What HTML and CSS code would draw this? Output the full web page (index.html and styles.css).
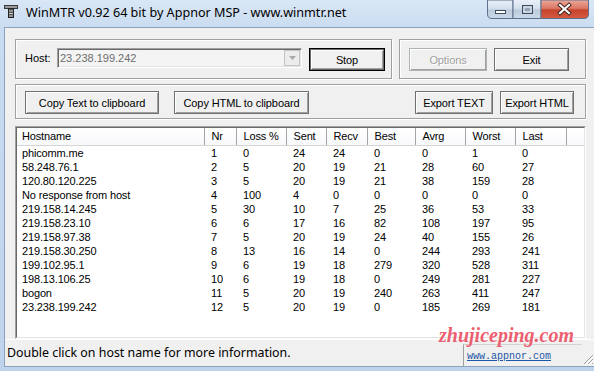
FILE: index.html
```html
<!DOCTYPE html>
<html>
<head>
<meta charset="utf-8">
<link rel="stylesheet" href="styles.css">
</head>
<body>
<div class="window">
  <div class="titlebar">
    <svg class="app-icon" width="14" height="13" viewBox="0 0 14 13">
      <rect x="0.5" y="0.5" width="13" height="3" fill="#9a9a9a" stroke="#3a3a3a"/>
      <rect x="4.5" y="3.5" width="5" height="9" fill="#5a5a5a" stroke="#222"/>
      <line x1="5" y1="6" x2="9" y2="6" stroke="#c8c8c8"/>
      <line x1="5" y1="8.5" x2="9" y2="8.5" stroke="#c8c8c8"/>
      <line x1="5" y1="11" x2="9" y2="11" stroke="#c8c8c8"/>
    </svg>
    <span class="title">WinMTR v0.92 64 bit by Appnor MSP - www.winmtr.net</span>
    <svg class="caption-buttons" width="102" height="19" viewBox="0 0 102 19">
      <defs>
        <linearGradient id="gBlue" x1="0" y1="0" x2="0" y2="1">
          <stop offset="0" stop-color="#e8eff8"/>
          <stop offset="0.45" stop-color="#d5e1ee"/>
          <stop offset="0.55" stop-color="#bccbdd"/>
          <stop offset="1" stop-color="#ccd9e8"/>
        </linearGradient>
        <linearGradient id="gRed" x1="0" y1="0" x2="0" y2="1">
          <stop offset="0" stop-color="#eaa99b"/>
          <stop offset="0.45" stop-color="#dc7763"/>
          <stop offset="0.55" stop-color="#c6432c"/>
          <stop offset="1" stop-color="#d65d45"/>
        </linearGradient>
      </defs>
      <path d="M0.5 0 V14 Q0.5 18.5 5 18.5 H26 V0 Z" fill="url(#gBlue)" stroke="#5f708a"/>
      <rect x="26" y="0" width="28" height="18.5" fill="url(#gBlue)"/>
      <path d="M26 0 V18.5 H54 V0" fill="none" stroke="#5f708a"/>
      <path d="M54 0 V18.5 H97 Q101.5 18.5 101.5 14 V0 Z" fill="url(#gRed)" stroke="#5f708a"/>
      <rect x="8.5" y="10.5" width="10" height="3" fill="#ffffff" stroke="#3f4b5e"/>
      <rect x="35.5" y="5.5" width="10" height="8" fill="#94a4ba" stroke="#3f4b5e"/>
      <rect x="37" y="7" width="7" height="5" fill="none" stroke="#ffffff"/>
      <path d="M73 5 L82 13 M82 5 L73 13" stroke="#3b1f1a" stroke-width="4" stroke-linecap="square"/>
      <path d="M73 5 L82 13 M82 5 L73 13" stroke="#ffffff" stroke-width="2.2" stroke-linecap="square"/>
    </svg>
  </div>
  <div class="frame">
    <div class="client">
      <div class="content">
        <div class="row-top">
          <div class="group group-host">
            <span class="host-label">Host:</span>
            <div class="combo">
              <span class="combo-text">23.238.199.242</span>
              <span class="combo-btn">
                <svg width="7" height="4" viewBox="0 0 7 4"><path d="M0 0 H7 L3.5 4 Z" fill="#a8a8a8"/></svg>
              </span>
            </div>
            <button class="btn btn-default btn-stop">Stop</button>
          </div>
          <div class="group group-opts">
            <button class="btn btn-options" disabled>Options</button>
            <button class="btn btn-exit">Exit</button>
          </div>
        </div>
        <div class="group group-export">
          <button class="btn btn-copytext">Copy Text to clipboard</button>
          <button class="btn btn-copyhtml">Copy HTML to clipboard</button>
          <button class="btn btn-exptext">Export TEXT</button>
          <button class="btn btn-exphtml">Export HTML</button>
        </div>
        <div class="list">
          <div class="list-inner">
            <table class="grid">
              <colgroup>
                <col class="c-host"><col class="c-nr"><col class="c-loss"><col class="c-sent"><col class="c-recv"><col class="c-best"><col class="c-avrg"><col class="c-worst"><col class="c-last"><col class="c-fill">
              </colgroup>
              <thead>
                <tr><th class="host">Hostname</th><th>Nr</th><th>Loss %</th><th>Sent</th><th>Recv</th><th>Best</th><th>Avrg</th><th>Worst</th><th>Last</th><th class="fill"></th></tr>
              </thead>
              <tbody>
                <tr><td class="host">phicomm.me</td><td>1</td><td>0</td><td>24</td><td>24</td><td>0</td><td>0</td><td>1</td><td>0</td><td></td></tr>
                <tr><td class="host">58.248.76.1</td><td>2</td><td>5</td><td>20</td><td>19</td><td>21</td><td>28</td><td>60</td><td>27</td><td></td></tr>
                <tr><td class="host">120.80.120.225</td><td>3</td><td>5</td><td>20</td><td>19</td><td>21</td><td>38</td><td>159</td><td>28</td><td></td></tr>
                <tr><td class="host">No response from host</td><td>4</td><td>100</td><td>4</td><td>0</td><td>0</td><td>0</td><td>0</td><td>0</td><td></td></tr>
                <tr><td class="host">219.158.14.245</td><td>5</td><td>30</td><td>10</td><td>7</td><td>25</td><td>36</td><td>53</td><td>33</td><td></td></tr>
                <tr><td class="host">219.158.23.10</td><td>6</td><td>6</td><td>17</td><td>16</td><td>82</td><td>108</td><td>197</td><td>95</td><td></td></tr>
                <tr><td class="host">219.158.97.38</td><td>7</td><td>5</td><td>20</td><td>19</td><td>24</td><td>40</td><td>155</td><td>26</td><td></td></tr>
                <tr><td class="host">219.158.30.250</td><td>8</td><td>13</td><td>16</td><td>14</td><td>0</td><td>244</td><td>293</td><td>241</td><td></td></tr>
                <tr><td class="host">199.102.95.1</td><td>9</td><td>6</td><td>19</td><td>18</td><td>279</td><td>320</td><td>528</td><td>311</td><td></td></tr>
                <tr><td class="host">198.13.106.25</td><td>10</td><td>6</td><td>19</td><td>18</td><td>0</td><td>249</td><td>281</td><td>227</td><td></td></tr>
                <tr><td class="host">bogon</td><td>11</td><td>5</td><td>20</td><td>19</td><td>240</td><td>263</td><td>411</td><td>247</td><td></td></tr>
                <tr><td class="host">23.238.199.242</td><td>12</td><td>5</td><td>20</td><td>19</td><td>0</td><td>185</td><td>269</td><td>181</td><td></td></tr>
              </tbody>
            </table>
          </div>
        </div>
      </div>
      <div class="statusbar">
        <div class="status-main">Double click on host name for more information.</div>
        <div class="status-link"><span class="link">www.appnor.com</span></div>
        <svg class="grip" width="12" height="12" viewBox="0 0 12 12">
          <path d="M11 2 L2 11 M11 6 L6 11 M11 10 L10 11" stroke="#a0a0a0" stroke-width="1"/>
          <path d="M12 3 L3 12 M12 7 L7 12" stroke="#ffffff" stroke-width="1"/>
        </svg>
      </div>
    </div>
  </div>
  <div class="watermark">zhujiceping.com</div>
</div>
</body>
</html>
```
FILE: styles.css
```css
html, body {
  margin: 0;
  padding: 0;
}
body {
  width: 594px;
  height: 371px;
  overflow: hidden;
  background: #c3d7ee;
}
.window {
  position: relative;
  width: 594px;
  height: 371px;
  display: flex;
  flex-direction: column;
  background: linear-gradient(#d9e7f6 0px, #c9dbf0 30px, #bfd3ec 100%);
}
.titlebar {
  height: 27px;
  display: flex;
  align-items: flex-start;
  flex: none;
}
.app-icon {
  margin: 5px 0 0 4px;
  flex: none;
}
.title {
  flex: none;
  margin: 4px 0 0 8px;
  font-family: "Noto Sans", "Open Sans", sans-serif;
  font-size: 12.6px;
  line-height: 18px;
  color: #000;
  white-space: nowrap;
}
.caption-buttons {
  display: block;
  flex: none;
  margin-left: auto;
  margin-right: 5px;
}
.frame {
  flex: 1;
  display: flex;
  padding: 0 5px 4px 4px;
}
.client {
  flex: 1;
  display: flex;
  flex-direction: column;
  background: #f0f0f0;
  border: 1px solid #8ba2bf;
  font-family: "Liberation Sans", Arial, sans-serif;
  font-size: 11px;
  color: #000;
}
.content {
  flex: 1;
  display: flex;
  flex-direction: column;
  padding: 11px 8px 0 10px;
}
.row-top {
  display: flex;
  gap: 7px;
  height: 40px;
}
.group {
  box-sizing: border-box;
  border: 1px solid #a0a0a0;
  box-shadow: inset 1px 1px 0 #fff, 1px 1px 0 #fff;
  display: flex;
  align-items: flex-start;
}
.group-host {
  width: 377px;
  padding: 8px 0 0 9px;
}
.group-opts {
  flex: 1;
  padding: 8px 0 0 9px;
  gap: 7px;
}
.group-export {
  margin-top: 5px;
  height: 35px;
  padding: 6px 11px 0 9px;
}
.host-label {
  width: 32px;
  line-height: 20px;
}
.combo {
  box-sizing: border-box;
  width: 245px;
  height: 20px;
  display: flex;
  align-items: stretch;
  background: #f4f4f4;
  border-top: 1px solid #a0a0a0;
  border-left: 1px solid #a0a0a0;
  border-right: 1px solid #fff;
  border-bottom: 1px solid #fff;
  box-shadow: inset 1px 1px 0 #696969, inset -1px -1px 0 #e3e3e3;
}
.combo-text {
  flex: 1;
  padding: 2px 0 0 2px;
  color: #6d6d6d;
  line-height: 14px;
}
.combo-btn {
  width: 16px;
  margin: 1px 1px 1px 0;
  box-sizing: border-box;
  background: #ececec;
  border: 1px solid #c5c5c5;
  display: flex;
  align-items: center;
  justify-content: center;
}
.btn {
  box-sizing: border-box;
  height: 23px;
  padding: 0;
  margin: 0;
  font-family: "Liberation Sans", Arial, sans-serif;
  font-size: 11px;
  letter-spacing: -0.1px;
  color: #000;
  background: #f0f0f0;
  border: 1px solid #707070;
  box-shadow: inset 1px 1px 0 #fff, inset -1px -1px 0 #a0a0a0;
  border-radius: 0;
}
.btn-default {
  border: 1px solid #000;
  box-shadow: inset 1px 1px 0 #696969, inset -1px -1px 0 #696969, inset 2px 2px 0 #fff, inset -2px -2px 0 #a0a0a0;
}
.btn-stop { width: 76px; margin-left: 7px; }
.btn-options {
  width: 78px;
  color: #a0a0a0;
  border-color: #adb2b5;
  text-shadow: 1px 1px 0 #fff;
}
.btn-exit { width: 75px; }
.btn-copytext { width: 134px; }
.btn-copyhtml { width: 135px; margin-left: 15px; }
.btn-exptext { width: 78px; margin-left: auto; }
.btn-exphtml { width: 74px; margin-left: 7px; }
.list {
  flex: 1;
  margin-top: 7px;
  display: flex;
  border-top: 1px solid #a0a0a0;
  border-left: 1px solid #a0a0a0;
  border-right: 1px solid #fff;
  border-bottom: 1px solid #fff;
}
.list-inner {
  flex: 1;
  background: #fff;
  border-top: 1px solid #696969;
  border-left: 1px solid #696969;
  border-right: 1px solid #e3e3e3;
  border-bottom: 1px solid #e3e3e3;
}
.grid {
  width: 100%;
  table-layout: fixed;
  border-collapse: collapse;
  border-spacing: 0;
}
.c-host { width: 187px; }
.c-nr { width: 32px; }
.c-loss { width: 50px; }
.c-sent { width: 40px; }
.c-recv { width: 41px; }
.c-best { width: 48px; }
.c-avrg { width: 50px; }
.c-worst { width: 50px; }
.c-last { width: 51px; }
.grid th, .grid td {
  padding: 0 0 0 7px;
  text-align: left;
  white-space: nowrap;
  font-weight: normal;
  letter-spacing: -0.15px;
}
.grid th {
  height: 17px;
  line-height: 16px;
  box-sizing: border-box;
  background: linear-gradient(#ffffff, #f7f8fa);
  border-right: 1px solid #a5a5a5;
  border-bottom: 1px solid #d5d5d5;
}
.grid th.fill {
  border-right: none;
}
.grid td {
  height: 14px;
  line-height: 14px;
}
.grid .host {
  padding-left: 5px;
}
.statusbar {
  height: 26px;
  flex: none;
  display: flex;
  align-items: stretch;
  border-top: 1px solid #fff;
  font-family: "Noto Sans", "Open Sans", sans-serif;
  font-size: 12.4px;
}
.status-main {
  width: 456px;
  padding: 3px 0 0 2px;
  line-height: 20px;
  white-space: nowrap;
}
.status-link {
  margin-top: 4px;
  width: 115px;
  border-top: 1px solid #d4d4d4;
  border-left: 1px solid #a0a0a0;
  padding: 1px 0 0 3px;
}
.link {
  font-family: "Liberation Mono", "Courier New", monospace;
  font-size: 10px;
  line-height: 18px;
  color: #1d56a6;
  text-decoration: underline;
}
.grip {
  margin: auto 0 1px auto;
}
.watermark {
  position: absolute;
  left: 439px;
  bottom: 25px;
  font-family: "Liberation Serif", "DejaVu Serif", serif;
  font-style: italic;
  font-weight: bold;
  font-size: 20px;
  line-height: 22px;
  color: #ec5f70;
  white-space: nowrap;
}
```
